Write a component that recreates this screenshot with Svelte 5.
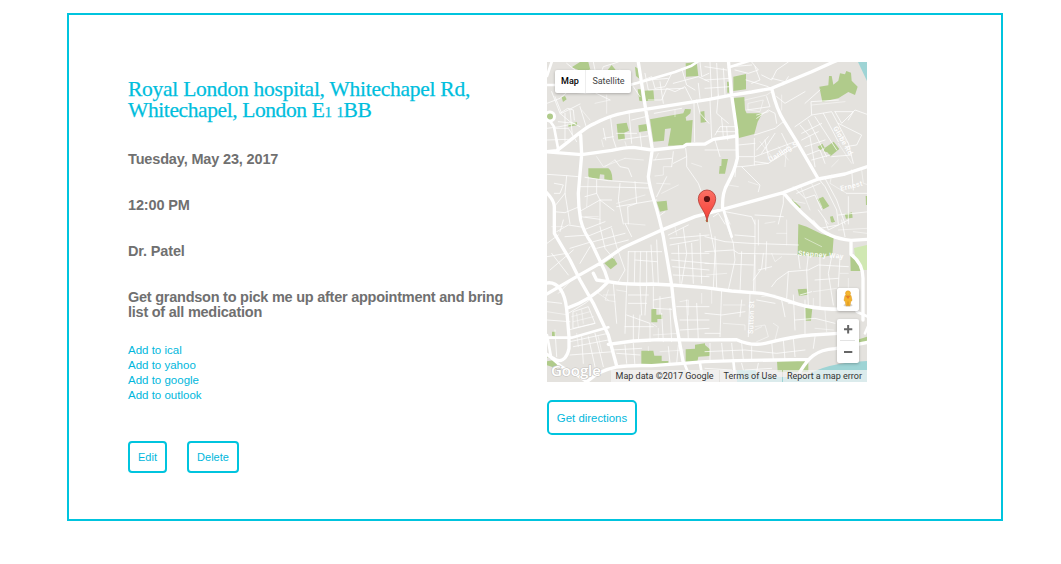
<script>
  const links = ['Add to ical', 'Add to yahoo', 'Add to google', 'Add to outlook'];

  // Parks and side streets, split in four tiles of three units per pixel.
  const tiles = [
    {
      x: -2, y: -2,
      parks: 'M80 22L105 6H130L136 30H100ZM188 30L200 15L212 30ZM270 20L283 28L290 62L273 48ZM422 10L455 6L460 48L423 50ZM298 92L325 90L328 122L300 123ZM278 88H287L292 124L283 122ZM315 178L415 160L420 147L438 148L436 160L422 172L424 182L443 180L438 255L369 257L378 205L360 207L357 242L325 245ZM280 196L305 192L308 212L282 216ZM215 192L245 188L252 212L238 218L240 238L220 241ZM130 325H190Q203 335 202 361L178 358V344L165 343L163 358L130 352ZM335 425L365 422L368 450L345 455ZM466 155L478 153L480 187L467 188ZM50 112L60 108L65 118L54 126ZM70 192L95 186L97 196L70 200Z',
      minor: 'M20 95L45 160L75 185L105 200M6 130L45 115L68 95L120 100M45 160L68 145L85 150L88 180M32 205H70L95 245M6 240L70 238M60 160V245M75 150L82 225M40 185L90 190M105 140L125 205M6 205L45 200L90 190M30 110L50 160L105 132M175 205L182 240M197 175L204 235L215 268M175 235L205 230M215 220H275M220 240L308 228M285 220L290 262M252 155L260 250M260 180L310 168M6 343L65 347L100 350M120 352L190 362L310 370M65 347L60 400L28 440M28 370L55 375L45 400H28M155 360V400L165 420L207 452M103 380H155L310 384M120 410L155 400M103 455L165 420L200 420M225 370L220 420L235 492M270 365L275 430L248 440L250 492M165 420V492M107 470L165 478M215 440L335 420M28 455L60 458L103 440M60 400L75 492M210 300L225 320L250 325L260 350M325 300L380 295M365 350L335 410M385 310L425 290L422 265M425 290V320L460 370L492 460M385 275L380 320M360 455L340 470M80 55L90 30L65 10M135 30L160 60L175 20L220 6M225 30L235 75L290 65M150 30L145 6M295 60L320 50L330 85M310 120H350L365 85L390 95L420 80L440 120M330 85L360 80L380 40M300 40L310 90L415 85M385 70L460 50L492 65M345 65L355 130M410 25L425 75L450 90M465 6L470 50L492 40M455 120L465 160L492 190M447 130L449 245M328 160L410 145M265 80L285 110M120 100L150 98L195 120M310 60L370 55M460 70L465 115',
      fine: 'M240 295L295 300M155 290L175 320L240 295M330 348L355 345V320H380M335 370L375 372M350 400L400 375M215 430L300 405M120 470H160M130 350L125 440M390 150V170M135 180L110 150M150 130L195 120M185 105V160M175 260L170 240M245 262L240 245M340 280L330 300M440 310L470 320M180 320L210 300'
    },
    {
      x: 158, y: -2,
      parks: 'M85 50L123 42V88L85 93ZM66 65H72V98H67ZM85 114L118 111L120 150L125 160H172L158 185L148 222L102 234L92 180ZM343 80L370 76L372 48H380L385 74L400 62L405 40L420 43L424 33L438 38L440 62L458 80L450 105L430 96L400 115L352 125ZM359 264L386 245L403 267L377 288L367 277L355 274ZM338 260L352 251L359 263L345 270ZM50 297H69L60 341H42L44 318H49ZM337 418L354 410L373 438L355 448ZM419 463L441 457L443 473L423 476ZM375 470L383 468L390 486H378ZM261 418L288 442L283 445L260 425ZM0 180L5 186H0ZM482 408H488V435H483Z',
      minor: 'M0 20L65 30M0 60L75 55M15 6L20 115M35 10L40 110M55 25L60 105M0 85L75 80M15 120L20 235M40 105L35 160L70 190M30 225L45 200H95M50 175L55 230M65 200L68 240M35 215H95M0 270H95M100 290H145M30 240L45 290M95 320H110L150 315L190 310M110 320L165 375L160 395M148 235V315M148 225L210 205L235 185M100 255L150 250M155 175L190 150L210 160L215 190M80 20L140 15M90 30L130 40L160 30L140 6M123 60L190 80L200 90M150 20L165 60L140 70M170 45L200 60L215 30L250 6M200 55L240 65M235 75L250 50M215 110L240 130L300 95M345 90L300 130M125 150L195 140L185 110M155 165L190 155M270 200L320 165L380 155L430 250L445 310M320 165L318 125L400 120M290 240L340 215M310 180L365 290M330 170L395 270M355 160L400 245M300 260L360 240M290 220L350 190M285 195L315 230L330 320M305 285L345 270L360 310M320 300L375 285M390 155L445 155L430 180M400 190L470 225L455 255L420 260M390 155L410 190L450 150L492 165M380 290L440 285M340 355L360 380L380 420L395 450L400 492M360 355L395 420L420 492M440 330L445 390M425 400L492 400M430 410V492M400 465L492 455M340 450L370 492M265 380L300 415L330 405L350 450M275 400L345 370M150 290L230 260L270 245M155 270L190 230M170 280L210 220M190 290L180 240M205 300L250 260L230 220M150 305L190 310L270 260M55 440L65 470M60 455L140 470L150 492M65 470L75 492M235 400V430L220 492M150 465L235 470M95 290L90 350M25 470L40 460L60 492',
      fine: 'M130 130L175 120L165 155L130 150ZM120 120L185 105L200 95M395 210L430 250M165 245L200 290M220 260L250 300M245 260L240 320M130 365L160 375M70 375L100 380M285 375L315 450M320 370L350 440M250 420L300 430M380 345L375 370L425 400M470 330L475 370L492 375M320 135L420 125M80 350L60 380M380 320L400 300M400 250L440 310M230 105V150'
    },
    {
      x: -2, y: 158,
      parks: 'M178 130L205 112L217 132L197 148ZM319 268L334 266V284H352V297H337V307H319ZM289 392H325L328 407H350V423H370V434L322 432L318 438L289 436ZM422 388L450 386V374L480 370V388H494V408L460 410L457 426L422 426ZM21 335H32V350L21 348ZM6 403L12 408L8 415ZM6 424L28 420L36 430L34 448L20 440L6 436ZM480 0H492V7H485Z',
      minor: 'M55 0L45 35M35 35L70 15L115 22M60 50L130 45M75 85L140 65M6 70L40 45M6 110L65 100M15 150L85 90M20 100L70 165M50 75L80 130M105 130L135 80M115 30L180 5M125 50L200 20M145 65L240 40M155 85L250 60M165 20L180 85L205 115M200 25L215 80L240 150L220 185M240 10L260 50M250 95L350 95M250 95L248 190M270 95L268 190M287 95L285 190M305 95V190M318 75L325 190M335 60L340 190M270 120L335 125M375 55L492 45M375 75L460 60M380 100H492M380 120L492 130M383 140L492 150M385 165L492 170M370 45L430 15M400 75L405 190M415 25L425 100L410 190M440 70L445 190M465 40L470 190M40 220L80 180M6 245L50 250M70 280L120 250L140 235M85 275L130 260L150 310L85 325ZM70 330L150 310M75 365L190 340M85 380L190 360M110 350L115 430M130 350L150 440M150 340L175 440M75 405L205 395M205 190L215 310M245 195L240 340M250 225H310M250 250H305M285 190L290 285M305 195L300 285M245 285L315 310V365M240 320H325M265 285V365M285 285L280 365M325 200V265L380 268M345 230V280M385 230L325 240M350 280L355 365M375 265L380 365M395 260H492M405 300H492M405 330L492 325M425 240L430 360M455 250L460 360M200 390L290 385M215 400L285 405M240 375L245 430M265 370L270 440M370 380L375 430M400 375L395 430M30 330L35 410M6 300L75 305',
      fine: 'M95 280L100 320M110 270L115 310M80 290L135 275M85 305L145 290M190 210L180 240L210 245M160 220L190 240M175 225H210M325 345L400 340M340 325V360M345 395L415 390M405 245L430 240V285M470 220V250M6 275L70 285M170 395L160 350M95 340L100 380M215 210L245 215M390 20L395 45M320 310L335 320M20 20H55M240 10L300 15M310 380V392'
    },
    {
      x: 158, y: 158,
      parks: 'M280 12L305 20L350 42L386 52L382 105L350 112L278 105ZM278 208L305 206L308 224L282 228ZM300 264H322L318 302H302ZM216 424L310 420V455H218ZM436 107L470 135L474 153H437ZM0 375L15 388L14 405L0 404ZM380 0L390 5L380 8ZM455 360L486 350V368L455 375Z',
      minor: 'M0 50L60 65L135 70L280 75M0 95L85 90L100 100L275 103M60 0L85 70L90 120L70 210M150 0V80L145 215M10 0L30 100L25 200M0 130L145 135M30 50L35 205M110 95L105 215M90 45L150 50M160 75V0M185 65L182 150M150 105V215M175 100L170 145L145 180M160 150L200 140M200 200L215 180L250 155L310 150L340 135L430 140M250 155L245 235M280 105L285 145M310 105L305 150L310 255M345 110V260M380 110L370 160L385 255M330 180L400 175M405 110L400 200M285 225L320 215M265 225L270 330M300 240V350M250 250L345 260M270 300L330 295L390 310M50 205L45 350M0 280L50 285L120 275M110 240L105 290M155 240L210 250M230 240L240 290M15 370V420M50 370L55 420M80 370L85 420M110 370L115 420M140 380V420M0 395L120 390L215 400L300 390M200 365L205 420M235 360L240 420M265 355L270 410M330 350L325 385M0 445L80 450M110 430L115 450M160 430L155 455M120 450L200 445M325 0L345 25L400 15M360 0L370 30L430 0M410 0L420 50M0 340H45M135 220L130 350',
      fine: 'M300 55L350 80M245 0V75M180 10L210 5M200 100L210 125L230 110M205 310L220 320L210 360M150 320L180 315L190 350L155 365M150 330L170 320M55 255H120M20 205V250M330 325L385 330M400 30L486 25M445 35L486 40M360 270L365 335M325 215L395 205M405 160H430M55 310L120 315V330M215 40H245M5 165L65 160M170 230L210 225M325 235V258M430 175V260'
    }
  ];

  // Through roads over the whole map, three units per pixel.
  const roads = [
    // east-west
    'M0 276L35 272C80 240 120 200 150 190C200 165 230 158 300 148L492 118L555 106L620 96L680 85L800 35L865 6L880 0',
    'M0 275L110 284L200 271Q240 262 265 262L322 270L415 260L425 253L480 252L505 238L575 228',
    'M0 705L95 650L165 610L230 565L355 508L450 470L533 448L715 398L820 357L900 342L980 316',
    'M145 640L155 660L190 665Q240 675 320 672L380 675L480 683L560 693L650 700C700 710 740 728 780 738Q830 748 890 748',
    'M190 853L265 843L340 839L480 840L575 839C610 855 640 856 670 848Q740 830 800 825L880 820',
    'M125 966C180 915 240 915 320 917L415 910L480 905L575 902L695 900L790 898',
    'M765 935C790 895 810 870 870 866L980 845',
    'M65 745Q140 720 190 665',
    // north-south
    'M279 0L302 148L322 268L310 350C315 400 335 430 355 530L380 675L390 770L415 910',
    'M107 225L110 284L100 400Q100 440 107 480Q115 515 140 550L180 635L190 665',
    'M0 393Q28 420 28 440V520L75 600L105 660L145 730L190 825L215 918',
    'M550 0L560 106L575 210L577 295Q570 330 548 370Q530 400 533 448',
    'M680 85Q695 150 718 185L755 245L820 357',
    'M715 398L740 427Q770 460 808 492Q850 535 918 541L980 537',
    'M918 541V583Q954 610 954 655V780',
    'M0 670C40 660 60 700 65 747L72 830V865C65 900 45 910 25 895L0 880'
  ].join('');
  const lanes = [
    'M0 75H30M255 75L290 65L390 36L440 17L465 0', 'M15 183L27 200L40 270', 'M6 48L22 0',
    'M0 833H80L190 802', 'M6 825L18 890', 'M20 895L50 920L100 948L125 966',
    'M420 915L430 940M465 910L475 966M565 902L570 950', 'M552 22L620 0', 'M535 448L560 530', 'M935 755L980 775L960 820'
  ].join('');
</script>

{#snippet street(x, y, angle, name)}
  <text class="street" transform="translate({x} {y}) rotate({angle})">{name}</text>
{/snippet}

<main class="card">
  <section class="details">
    <h1>Royal London hospital, Whitechapel Rd,<br /><span class="second">Whitechapel, London E<span class="num">1</span> <span class="num">1</span>BB</span></h1>
    <p>Tuesday, May 23, 2017</p>
    <p>12:00 PM</p>
    <p>Dr. Patel</p>
    <p class="note">Get grandson to pick me up after appointment and bring<br />list of all medication</p>
    <ul>
      {#each links as link}<li><a href="#top">{link}</a></li>{/each}
    </ul>
    <div class="actions">
      <button class="edit">Edit</button>
      <button class="delete">Delete</button>
    </div>
  </section>

  <section class="location">
    <div class="map">
      <svg class="canvas" viewBox="0 0 320 320">
        <defs>
          <linearGradient id="pin" x2="0" y2="1">
            <stop stop-color="#fb7064" />
            <stop offset="1" stop-color="#f53d35" />
          </linearGradient>
        </defs>
        <rect width="320" height="320" fill="#e4e2de" />
        <path d="M311 0H320V19Z" fill="#9ed4d5" />
        <path d="M307 186L320 183V208H315L308 195Z" fill="#d0e8b2" />
        <path d="M258 315Q276 301 320 299V320H190V308H208L214 315Z" fill="#9ed4d5" />
        {#each tiles as t}
          <g transform="translate({t.x} {t.y}) scale(.33333)"><path d={t.parks} fill="#b0cb8b" /></g>
        {/each}
        <g fill="none" stroke="#fff" stroke-linecap="round" stroke-linejoin="round">
          {#each tiles as t}
            <g transform="translate({t.x} {t.y}) scale(.33333)">
              <path d={t.fine} stroke-width="2.4" stroke-opacity=".6" />
              <path d={t.minor} stroke-width="2.8" stroke-opacity=".8" />
            </g>
          {/each}
          <g transform="translate(-2 -2) scale(.33333)">
            <path d={lanes} stroke-width="8" />
            <path d={roads} stroke-width="10" />
          </g>
        </g>
        <circle cx="3" cy="54.500" r="4.500" fill="#b0cb8b" stroke="#fff" stroke-width="3" />
        {@render street(251, 193.500, 4, 'Stepney Way')}
        {@render street(206, 272, -88, 'Sutton St')}
        {@render street(286, 66, 60, 'Globe Rd')}
        {@render street(223, 100, -30, 'Darling St')}
        {@render street(294, 129, -14, 'Ernest')}
        <g class="logo"><text x="4" y="313.500">Google</text></g>
        <g>
          <path d="M160 160C159.300 149 151.300 145 151.300 136.700A8.700 8.700 0 0 1 168.700 136.700C168.700 145 160.700 149 160 160Z" fill="url(#pin)" stroke="#b23a32" stroke-width=".8" />
          <circle cx="160" cy="137" r="3.100" fill="#5c1212" />
        </g>
      </svg>
      <div class="types"><span class="on">Map</span><span>Satellite</span></div>
      <div class="pegman">
        <svg viewBox="0 0 22 23">
          <ellipse cx="11" cy="17.300" rx="4.500" ry="1.300" fill="#d4d4d4" />
          <path d="M8 7.500Q11 6.500 14 7.500L15 12.500L13.700 13.500L13 17.800H9L8.300 13.500L7 12.500Z" fill="#f4b32c" stroke="#d8941f" stroke-width=".5" />
          <path d="M8.800 8H13.200L11 11Z" fill="#e97c28" />
          <circle cx="11" cy="5.300" r="2.500" fill="#f6b62e" stroke="#d8941f" stroke-width=".5" />
          <path d="M11 13.500V17.500" stroke="#cf861b" stroke-width=".7" />
        </svg>
      </div>
      <div class="zoom">
        <svg viewBox="0 0 22 44">
          <path d="M7 10.300H15.300M11.150 6.100V14.500M7 33H15.300" stroke="#666" stroke-width="2" />
          <path d="M3 21.500H18" stroke="#e3e3e3" />
        </svg>
      </div>
      <div class="credit"><span>Map data ©2017 Google</span><span>Terms of Use</span><span>Report a map error</span></div>
    </div>
    <button class="directions">Get directions</button>
  </section>
</main>

<style>
  :global(body) { background: #fff; }
  .card {
    box-sizing: border-box;
    width: 936px;
    height: 508px;
    margin: 13px 0 0 67px;
    padding: 47px 59px 0;
    border: 2px solid #00c4de;
    display: flex;
    font-family: "Liberation Sans", Arial, sans-serif;
  }
  .details { width: 419px; padding-top: 17px; }
  h1 {
    margin: 0 0 29px;
    color: #00bedd;
    font: 400 21.5px/21px "Liberation Serif", serif;
    letter-spacing: -.26px;
    white-space: nowrap;
    -webkit-text-stroke: .25px #00bedd;
  }
  .second { letter-spacing: -.4px; }
  .num { font-size: 15px; }
  p {
    margin: 0 0 31px;
    color: #707070;
    font-size: 14.500px;
    line-height: 15px;
    font-weight: 700;
    letter-spacing: -.15px;
    white-space: nowrap;
  }
  .note { margin-bottom: 23px; letter-spacing: -.245px; }
  ul { margin: 0; padding: 0; list-style: none; }
  li { height: 15px; line-height: 15px; font-size: 11.500px; }
  a { color: #00b7dc; text-decoration: none; }
  button {
    box-sizing: border-box;
    height: 32px;
    padding: 0;
    border: 2px solid #00c4de;
    border-radius: 4px;
    background: #fff;
    color: #00b7dc;
    font: 11px/15px "Liberation Sans", Arial, sans-serif;
    white-space: nowrap;
  }
  .actions { display: flex; gap: 20px; margin-top: 38px; }
  .edit { width: 39px; }
  .delete { width: 52px; }
  .directions { display: block; width: 90px; height: 35px; margin-top: 18px; padding-top: 2px; border-radius: 5px; font-size: 11.400px; }
  .map { position: relative; width: 320px; height: 320px; overflow: hidden; font-family: Roboto, Arial, sans-serif; }
  .canvas { display: block; width: 320px; height: 320px; }
  .street { font: 500 7px Roboto, sans-serif; fill: #fff; letter-spacing: .5px; }
  .logo text { font: 600 15px "Open Sans", sans-serif; fill: #fff; stroke: #c4c2be; stroke-width: 1.200px; paint-order: stroke; letter-spacing: -.1px; }
  .types, .pegman, .zoom { position: absolute; background: #fff; border-radius: 2px; box-shadow: 0 1px 3px rgba(0, 0, 0, .25); }
  .types { left: 8px; top: 8px; width: 76px; height: 23px; display: flex; font-size: 9px; line-height: 22px; color: #444; }
  .types span { flex: 1; text-align: center; }
  .types .on { flex: 0 0 30px; color: #000; font-weight: 500; border-right: 1px solid #eee; }
  .pegman { left: 290px; top: 226px; width: 22px; height: 23px; }
  .zoom { left: 290px; top: 257px; width: 22px; height: 44px; }
  .pegman svg, .zoom svg { display: block; }
  .credit { position: absolute; right: 0; bottom: 0; height: 12px; display: flex; font-size: 9px; line-height: 12px; color: #333; white-space: nowrap; }
  .credit span { padding: 0 5px; background: rgba(245, 245, 245, .7); }
  .credit span + span { margin-left: 1px; padding-left: 4px; }
</style>
